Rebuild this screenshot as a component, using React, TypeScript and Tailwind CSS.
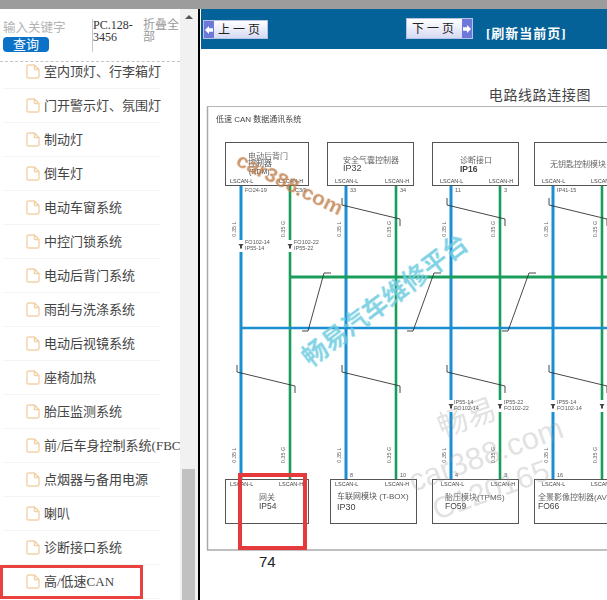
const MENU = [
  "室内顶灯、行李箱灯",
  "门开警示灯、氛围灯",
  "制动灯",
  "倒车灯",
  "电动车窗系统",
  "中控门锁系统",
  "电动后背门系统",
  "雨刮与洗涤系统",
  "电动后视镜系统",
  "座椅加热",
  "胎压监测系统",
  "前/后车身控制系统(FBCM)",
  "点烟器与备用电源",
  "喇叭",
  "诊断接口系统",
  "高/低速CAN",
];

const CJK = '"Liberation Serif", "Noto Sans CJK SC", serif';
const SANS = '"Liberation Sans", "Noto Sans CJK SC", sans-serif';

const BLUE = "#1b8fd2";
const GREEN = "#1a9d5c";
const COLS = [
  [241, 290],
  [346, 396],
  [451, 500],
  [553, 602],
];

function FileIcon() {
  return (
    <svg width="14" height="15" viewBox="0 0 14 15" fill="none" className="shrink-0">
      <path
        d="M1 2.5 Q1 1 2.5 1 H8.5 L13 5.5 V12.5 Q13 14 11.5 14 H2.5 Q1 14 1 12.5 Z M8.5 1 V5.5 H13"
        stroke="#f2d2a9"
        strokeWidth="1.4"
        strokeLinejoin="round"
      />
    </svg>
  );
}

function Sidebar() {
  return (
    <aside className="relative flex w-[198px] shrink-0 overflow-hidden">
      <div className="relative w-[180px] shrink-0 overflow-hidden bg-white">
        <div className="relative z-10 flex h-[53px] border-b border-dashed border-[#c4c4c4]">
          <div className="flex w-[92px] shrink-0 flex-col pl-[3px] pt-[11px]">
            <span className="text-[12.5px] leading-[17px] text-[#b4b4b4]" style={{ fontFamily: SANS }}>
              输入关键字
            </span>
            <button className="h-[15px] w-[46px] rounded-[4px] bg-[#0b72c8] text-[13px] leading-[15px] text-white" style={{ fontFamily: SANS }}>
              查询
            </button>
          </div>
          <div
            className="mt-[10px] h-[33px] w-[51px] shrink-0 border-l border-[#c8c8c8] text-[12px] leading-[12px] text-[#333]"
            style={{ fontFamily: CJK }}
          >
            PC.128-
            <br />
            3456
          </div>
          <div className="mt-[10px] w-[37px] text-[12px] leading-[12px] text-[#9a9a9a]" style={{ fontFamily: SANS }}>
            折叠全部
          </div>
        </div>
        <ul className="-mt-[7px]" style={{ fontFamily: CJK }}>
          {MENU.map((name) => (
            <li
              key={name}
              className="ml-[3px] flex h-[34px] w-[157px] items-center gap-[4px] border-b border-[#f4f4f4] pl-[23px] text-[13px] whitespace-nowrap text-[#444]"
            >
              <FileIcon />
              {name}
            </li>
          ))}
        </ul>
        <div className="absolute left-0 top-[556px] h-[34px] w-[143px] border-[3px] border-[#e8413f]" />
      </div>
      {/* scrollbar */}
      <div className="relative flex w-[18px] flex-col items-center bg-[#f1f1f1]">
        <div className="mt-[6px] h-0 w-0 border-x-[4px] border-b-[4px] border-x-transparent border-b-[#555]" />
        <div className="absolute bottom-0 left-[2px] h-[131px] w-[13px] bg-[#c1c1c1]" />
      </div>
    </aside>
  );
}

function PageButton({ dir, label }: { dir: "prev" | "next"; label: string }) {
  const arrow = (
    <span className="flex h-full w-[10px] shrink-0 items-center justify-center bg-[#6d78d8]">
      <svg width="8" height="8" viewBox="0 0 8 8" fill="white">
        <path d={dir === "prev" ? "M0 4 L4 0 V2.2 H8 V5.8 H4 V8 Z" : "M8 4 L4 0 V2.2 H0 V5.8 H4 V8 Z"} />
      </svg>
    </span>
  );
  return (
    <button
      className={`flex items-center border border-[#b4c2e4] bg-gradient-to-b from-white to-[#d6daf3] text-[12px] tracking-[3px] text-[#222] ${
        dir === "prev" ? "mt-[11px] h-[19px] w-[65px]" : "mt-[9px] h-[21px] w-[67px]"
      }`}
      style={{ fontFamily: SANS }}
    >
      {dir === "prev" && arrow}
      <span className="flex-1 text-center">{label}</span>
      {dir === "next" && arrow}
    </button>
  );
}

function Label({ x, y, children, size = 5.5, weight = 400, color = "#555" }: any) {
  return (
    <text x={x} y={y} fontSize={size} fontWeight={weight} fill={color} fontFamily={SANS}>
      {children}
    </text>
  );
}

function Rotated({ x, y, children }: { x: number; y: number; children: string }) {
  return (
    <text x={x} y={y} fontSize="5.5" fill="#666" fontFamily={SANS} transform={`rotate(-90 ${x} ${y})`} textAnchor="middle">
      {children}
    </text>
  );
}

function Twist({ x1, x2, y }: { x1: number; x2: number; y: number }) {
  return (
    <path
      d={`M${x1} ${y} V${y + 7} L${x2} ${y + 21} V${y + 28}`}
      fill="none"
      stroke="#333"
      strokeWidth="0.9"
    />
  );
}

function Link({ x, x2 }: { x: number; x2: number }) {
  return <path d={`M${x} 273 H${x - 7} L${x2} 331 H${x2 - 6}`} fill="none" stroke="#333" strokeWidth="0.9" />;
}

function Conn({ x, y }: { x: number; y: number }) {
  return (
    <g>
      <rect x={x - 3} y={y - 6} width="6" height="12" fill="white" />
      <path d={`M${x - 2.5} ${y - 2} H${x + 2.5} L${x + 1} ${y} V${y + 2.5} H${x - 1} V${y} Z`} fill="#444" />
    </g>
  );
}

function Diagram() {
  return (
    <svg
      width="406"
      height="450"
      viewBox="201 106 406 450"
      className="block blur-[0.35px]"
    >
      <path d="M607 106 H207.5 V550 H607" fill="none" stroke="#aaa" strokeWidth="1.5" />
      <line x1="207" y1="106" x2="607" y2="106" stroke="#b5b5b5" strokeWidth="2" />
      <Label x={216} y={122} size={8} color="#444">低速 CAN 数据通讯系统</Label>

      {/* wires */}
      {COLS.map(([l, h]) => (
        <g key={l}>
          <line x1={l} y1="185" x2={l} y2="479" stroke={BLUE} strokeWidth="3" />
          <line x1={h} y1="185" x2={h} y2="479" stroke={GREEN} strokeWidth="2.6" />
        </g>
      ))}
      <line x1="290" y1="277" x2="607" y2="277" stroke={GREEN} strokeWidth="2.8" />
      <line x1="241" y1="328" x2="607" y2="328" stroke={BLUE} strokeWidth="2.6" />

      <Twist x1={342} x2={400} y={198} />
      <Twist x1={447} x2={505} y={198} />
      <Twist x1={549} x2={607} y={198} />
      <Twist x1={237} x2={295} y={365} />
      <Twist x1={342} x2={400} y={365} />
      <Twist x1={447} x2={505} y={365} />
      <Twist x1={549} x2={607} y={365} />
      <Link x={331} x2={308} />
      <Link x={441} x2={413} />
      <Link x={536} x2={508} />

      {/* module boxes */}
      <g fill="white" stroke="#555" strokeWidth="1">
        <rect x="225.5" y="142.5" width="83" height="43" />
        <rect x="327.5" y="142.5" width="86" height="43" />
        <rect x="432.5" y="142.5" width="86" height="43" />
        <rect x="534.5" y="142.5" width="90" height="43" />
        <rect x="225.5" y="479.5" width="83" height="44" />
        <rect x="330.5" y="479.5" width="86" height="44" />
        <rect x="432.5" y="479.5" width="86" height="44" />
        <rect x="534.5" y="479.5" width="90" height="44" />
      </g>

      <Label x={248} y={159} size={8} color="#666">电动后背门</Label>
      <Label x={248} y={166} size={8} color="#555">控制器</Label>
      <Label x={249} y={174} size={7} color="#444">(RDM)</Label>
      <Label x={343} y={163} size={8} color="#666">安全气囊控制器</Label>
      <Label x={343} y={171} size={9} color="#444">IP32</Label>
      <Label x={460} y={163} size={8} color="#666">诊断接口</Label>
      <Label x={460} y={172} size={8.5} weight={700} color="#444">IP16</Label>
      <Label x={550} y={167} size={8} color="#666">无钥匙控制模块</Label>

      <Label x={259} y={500} size={8} color="#666">网关</Label>
      <Label x={259} y={509} size={8.5} color="#444">IP54</Label>
      <Label x={337} y={499} size={8} color="#555">车联网模块 (T-BOX)</Label>
      <Label x={337} y={510} size={9} color="#444">IP30</Label>
      <Label x={445} y={500} size={8} color="#666">胎压模块(TPMS)</Label>
      <Label x={445} y={509} size={8.5} color="#444">FO59</Label>
      <Label x={538} y={500} size={8} color="#666">全景影像控制器(AVM)</Label>
      <Label x={538} y={509} size={8.5} color="#444">FO66</Label>

      {[
        [230, 279],
        [335, 385],
        [440, 489],
        [542, 591],
      ].map(([l, h]) => (
        <g key={l}>
          <Label x={l} y={183} color="#444">LSCAN-L</Label>
          <Label x={h} y={183} color="#444">LSCAN-H</Label>
        </g>
      ))}
      {[
        [230, 279],
        [335, 385],
        [441, 491],
        [542, 591],
      ].map(([l, h]) => (
        <g key={l}>
          <Label x={l} y={486} color="#444">LSCAN-L</Label>
          <Label x={h} y={486} color="#444">LSCAN-H</Label>
        </g>
      ))}

      <Label x={245} y={192}>FO24-19</Label>
      <Label x={295} y={192}>C3/9</Label>
      <Label x={350} y={192}>33</Label>
      <Label x={400} y={192}>34</Label>
      <Label x={455} y={192}>11</Label>
      <Label x={504} y={192}>3</Label>
      <Label x={557} y={192}>IP41-15</Label>
      <Label x={245} y={477}>13</Label>
      <Label x={295} y={477}>14</Label>
      <Label x={350} y={477}>8</Label>
      <Label x={400} y={477}>10</Label>
      <Label x={455} y={477}>4</Label>
      <Label x={504} y={477}>3</Label>
      <Label x={557} y={477}>16</Label>

      {COLS.flatMap(([l, h]) => [
        <Rotated key={l + "b"} x={l - 5} y={229}>0.35 L</Rotated>,
        <Rotated key={l + "c"} x={h - 5} y={229}>0.35 G</Rotated>,
        <Rotated key={l + "d"} x={l - 5} y={455}>0.35 L</Rotated>,
        <Rotated key={l + "e"} x={h - 5} y={455}>0.35 G</Rotated>,
      ])}

      <Conn x={241} y={246} />
      <Conn x={290} y={246} />
      <Label x={245} y={244}>FO102-14</Label>
      <Label x={245} y={250}>IP55-14</Label>
      <Label x={294} y={244}>FO102-22</Label>
      <Label x={294} y={250}>IP55-22</Label>

      <Conn x={451} y={406} />
      <Conn x={500} y={406} />
      <Conn x={553} y={406} />
      <Conn x={602} y={406} />
      <Label x={454} y={404}>IP55-14</Label>
      <Label x={454} y={410}>FO102-14</Label>
      <Label x={504} y={404}>IP55-22</Label>
      <Label x={504} y={410}>FO102-22</Label>
      <Label x={557} y={404}>IP55-14</Label>
      <Label x={557} y={410}>FO102-14</Label>
    </svg>
  );
}

export default function App() {
  return (
    <div className="flex h-[600px] w-[607px] flex-col overflow-hidden bg-white">
      <div className="h-[9px] shrink-0 bg-[#9c9c9c]" />
      <div className="flex min-h-0 flex-1">
        <Sidebar />
        <div className="w-[3px] shrink-0 border-r border-white bg-black" />
        <main className="relative min-w-0 flex-1 overflow-hidden">
          <header className="flex h-[40px] bg-[#046299] pl-[2px]">
            <PageButton dir="prev" label="上一页" />
            <div className="ml-[138px]">
              <PageButton dir="next" label="下一页" />
            </div>
            <span
              className="ml-[13px] mt-[17px] text-[13px] leading-[16px] font-bold tracking-[1px] whitespace-nowrap text-white"
              style={{ fontFamily: CJK }}
            >
              [刷新当前页]
            </span>
          </header>
          <h1
            className="h-[57px] pr-[16px] pt-[37px] text-right text-[14px] leading-[18px] tracking-[0.6px] text-[#444]"
            style={{ fontFamily: SANS }}
          >
            电路线路连接图
          </h1>
          <Diagram />
          <div
            className="absolute left-[58px] top-[544px] text-[15px] leading-[18px] text-[#222]"
            style={{ fontFamily: SANS }}
          >
            74
          </div>

          {/* watermarks */}
          <span
            className="absolute left-[31px] top-[161px] rotate-[26deg] text-[21px] leading-[28px] font-bold whitespace-nowrap text-[#bf7d48]/80 blur-[0.5px]"
            style={{ fontFamily: SANS }}
          >
            car388.com
          </span>
          <span
            className="absolute left-[84px] top-[277px] -rotate-[37deg] text-[25px] leading-[28px] font-bold whitespace-nowrap text-[#6fcbe0]/85 blur-[0.4px]"
            style={{ fontFamily: SANS }}
          >
            畅易汽车维修平台
          </span>
          <span
            className="absolute left-[236px] top-[392px] -rotate-[20deg] text-[30px] leading-[34px] whitespace-nowrap text-[#999]/30"
            style={{ fontFamily: SANS }}
          >
            畅易
          </span>
          <span
            className="absolute left-[204px] top-[427px] -rotate-[20deg] text-[31px] leading-[38px] whitespace-nowrap text-[#999]/30"
            style={{ fontFamily: SANS }}
          >
            car388.com
          </span>
          <span
            className="absolute left-[229px] top-[464px] -rotate-[20deg] text-[30px] leading-[34px] whitespace-nowrap text-[#999]/30"
            style={{ fontFamily: SANS }}
          >
            C120165
          </span>

          {/* red annotation */}
          <div className="absolute left-[37px] top-[464px] h-[77px] w-[69px] border-[4px] border-[#e53a3c]" />
        </main>
      </div>
    </div>
  );
}
